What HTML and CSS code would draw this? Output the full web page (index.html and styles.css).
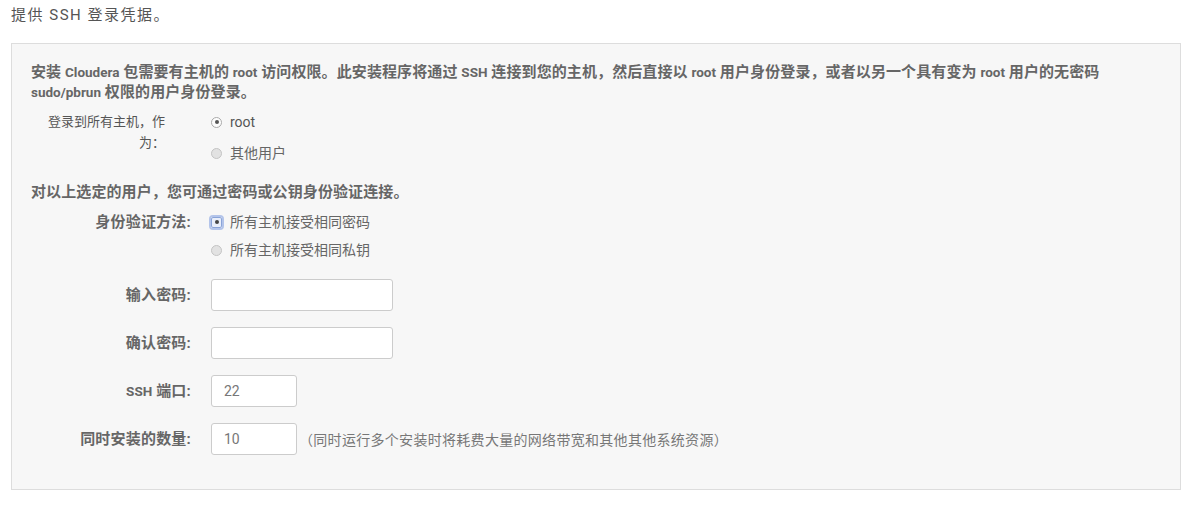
FILE: index.html
```html
<!DOCTYPE html>
<html lang="zh-CN">
<head>
  <meta charset="UTF-8">
  <title>提供 SSH 登录凭据</title>
  <link rel="stylesheet" href="styles.css">
</head>
<body>
  <h2 class="step-title">提供 SSH 登录凭据。</h2>

  <div class="panel">
    <p class="note">安装 <span class="en">Cloudera</span> 包需要有主机的 <span class="en">root</span> 访问权限。此安装程序将通过 <span class="en">SSH</span> 连接到您的主机，然后直接以 <span class="en">root</span> 用户身份登录，或者以另一个具有变为 <span class="en">root</span> 用户的无密码<br><span class="en">sudo/pbrun</span> 权限的用户身份登录。</p>

    <div class="row">
      <label class="row-label label-wrap">登录到所有主机，作为：</label>
      <div class="options options-wide">
        <label class="opt"><input type="radio" name="user" checked> <span class="en-light">root</span></label>
        <label class="opt"><input type="radio" name="user"> 其他用户</label>
      </div>
    </div>

    <p class="note note-2">对以上选定的用户，您可通过密码或公钥身份验证连接。</p>

    <div class="row row-2">
      <label class="row-label">身份验证方法:</label>
      <div class="options">
        <label class="opt"><input type="radio" name="auth" class="focused" checked> 所有主机接受相同密码</label>
        <label class="opt"><input type="radio" name="auth"> 所有主机接受相同私钥</label>
      </div>
    </div>

    <div class="row field first-field">
      <label class="row-label">输入密码:</label>
      <input type="password" class="text-input">
    </div>

    <div class="row field">
      <label class="row-label">确认密码:</label>
      <input type="password" class="text-input">
    </div>

    <div class="row field">
      <label class="row-label"><span class="en">SSH</span> 端口:</label>
      <input type="text" class="text-input small" value="22">
    </div>

    <div class="row field">
      <label class="row-label">同时安装的数量:</label>
      <input type="text" class="text-input small" value="10">
      <span class="hint">（同时运行多个安装时将耗费大量的网络带宽和其他其他系统资源）</span>
    </div>
  </div>
</body>
</html>
```

FILE: styles.css
```css
body {
  margin: 0;
  font-family: Roboto, "Noto Sans CJK SC", sans-serif;
  background: #fff;
  color: #666;
}
.step-title {
  margin: 0;
  padding: 4px 11px 0;
  font-size: 15px;
  font-weight: normal;
  letter-spacing: 1.5px;
  line-height: 22px;
  color: #555;
}
.panel {
  margin: 17px 4px 0 11px;
  padding: 18px 19px 34px;
  background: #f7f7f7;
  border: 1px solid #ddd;
}
.note {
  margin: 0;
  font-size: 15px;
  font-weight: bold;
  letter-spacing: 0.1px;
  line-height: 20px;
  color: #666;
  white-space: nowrap;
}
.en {
  font-size: 13.5px;
  letter-spacing: 0;
  line-height: 1;
}
.en-light {
  color: #555;
}
.note-2 {
  margin-top: 18px;
}
.row {
  display: flex;
  align-items: flex-start;
  margin-top: 9px;
}
.row-2 {
  margin-top: 9px;
}
.row-label {
  width: 160px;
  flex: none;
  box-sizing: border-box;
  text-align: right;
  font-size: 15px;
  font-weight: bold;
  letter-spacing: 0.2px;
  line-height: 22px;
  color: #666;
}
.label-wrap {
  padding: 0 26px 0 14px;
  font-size: 13px;
  font-weight: normal;
  letter-spacing: 0;
  line-height: 21px;
  color: #555;
}
.options {
  margin-left: 20px;
  display: flex;
  flex-direction: column;
  gap: 6px;
}
.options-wide {
  gap: 9px;
}
.opt {
  display: flex;
  align-items: center;
  font-size: 14px;
  line-height: 22px;
  color: #666;
}
.opt input {
  -webkit-appearance: none;
  appearance: none;
  width: 11px;
  height: 11px;
  margin: 0 8px 0 0;
  border: 1px solid #c4c4c4;
  border-radius: 50%;
  background: #e2e2e2;
  box-sizing: border-box;
  position: relative;
}
.opt input:checked {
  background: #fdfdfd;
  border-color: #aaa;
}
.opt input:checked::after {
  content: "";
  position: absolute;
  left: 2.5px;
  top: 2.5px;
  width: 4px;
  height: 4px;
  border-radius: 50%;
  background: #555;
}
.opt input.focused {
  outline: 2px solid #b3c4ea;
  outline-offset: 0;
  border-radius: 2px;
  border-color: #8aa4d8;
  background: #e9eefa;
}
.opt input.focused::after {
  background: #444;
}
.field {
  align-items: center;
  margin-top: 16px;
}
.first-field {
  margin-top: 18px;
}
.text-input {
  margin-left: 20px;
  width: 182px;
  height: 32px;
  box-sizing: border-box;
  padding: 0 12px;
  border: 1px solid #ccc;
  border-radius: 3px;
  background: #fff;
  font-family: Roboto, "Noto Sans CJK SC", sans-serif;
  font-size: 14px;
  color: #777;
}
.text-input.small {
  width: 86px;
}
.hint {
  margin-left: 2px;
  font-size: 14px;
  letter-spacing: 0.3px;
  color: #777;
}
```
